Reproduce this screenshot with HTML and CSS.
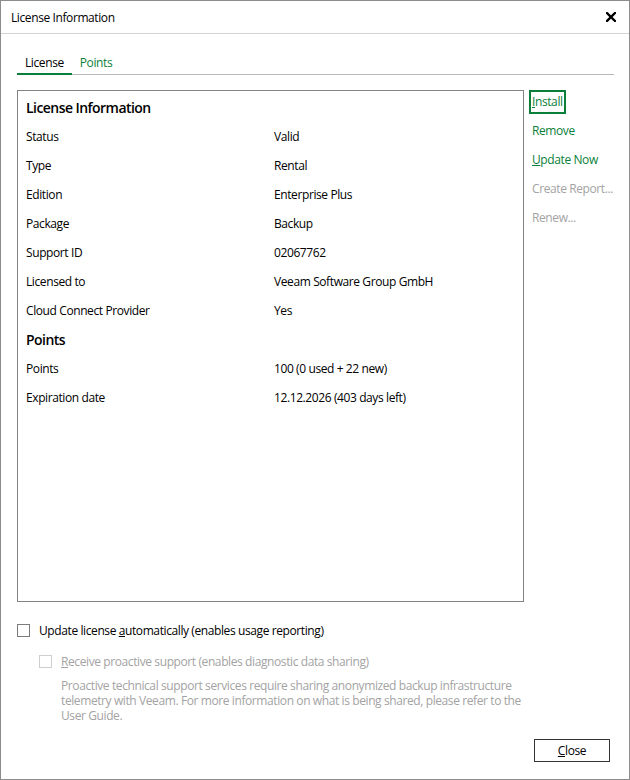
FILE: index.html
```html
<!DOCTYPE html>
<html>
<head>
<meta charset="utf-8">
<link rel="stylesheet" href="styles.css">
</head>
<body>
<div class="window">
  <div class="titlebar">
    <span class="title">License Information</span>
    <svg class="close-x" width="10" height="10" viewBox="0 0 10 10"><path d="M1 1 L9 9 M9 1 L1 9" stroke="#000" stroke-width="2.4" stroke-linecap="square"/></svg>
  </div>
  <div class="content">
    <div class="tabs">
      <div class="tab active">License</div>
      <div class="tab">Points</div>
    </div>
    <div class="main">
      <div class="panel">
        <div class="heading">License Information</div>
        <div class="row"><span class="label">Status</span><span class="value">Valid</span></div>
        <div class="row"><span class="label">Type</span><span class="value">Rental</span></div>
        <div class="row"><span class="label">Edition</span><span class="value">Enterprise Plus</span></div>
        <div class="row"><span class="label">Package</span><span class="value">Backup</span></div>
        <div class="row"><span class="label">Support ID</span><span class="value">02067762</span></div>
        <div class="row"><span class="label">Licensed to</span><span class="value">Veeam Software Group GmbH</span></div>
        <div class="row"><span class="label">Cloud Connect Provider</span><span class="value">Yes</span></div>
        <div class="heading">Points</div>
        <div class="row"><span class="label">Points</span><span class="value">100 (0 used + 22 new)</span></div>
        <div class="row"><span class="label">Expiration date</span><span class="value">12.12.2026 (403 days left)</span></div>
      </div>
      <div class="actions">
        <div class="action focused"><u>I</u>nstall</div>
        <div class="action">Remove</div>
        <div class="action"><u>U</u>pdate Now</div>
        <div class="action disabled">Create Report...</div>
        <div class="action disabled">Renew...</div>
      </div>
    </div>
    <div class="check-row">
      <span class="checkbox"></span>
      <span class="check-label">Update license <u>a</u>utomatically (enables usage reporting)</span>
    </div>
    <div class="sub">
      <div class="check-row sub-check">
        <span class="checkbox disabled"></span>
        <span class="check-label disabled"><u>R</u>eceive proactive support (enables diagnostic data sharing)</span>
      </div>
      <p class="desc">Proactive technical support services require sharing anonymized backup infrastructure telemetry with Veeam. For more information on what is being shared, please refer to the User Guide.</p>
    </div>
    <div class="footer">
      <div class="btn"><u>C</u>lose</div>
    </div>
  </div>
</div>
</body>
</html>
```
FILE: styles.css
```css
html, body {
  margin: 0;
  padding: 0;
  background: #fff;
}
body {
  font-family: "Open Sans", "Noto Sans", sans-serif;
  font-size: 12px;
  letter-spacing: -0.4px;
  color: #000;
}
.window {
  width: 630px;
  height: 780px;
  box-sizing: border-box;
  border: 1px solid #8c8c8c;
  display: flex;
  flex-direction: column;
}
.titlebar {
  height: 32px;
  border-bottom: 1px solid #d4d4d4;
  display: flex;
  align-items: center;
  justify-content: space-between;
  padding: 0 13px 0 10px;
}
.title {
  font-size: 12px;
}
.close-x {
  display: block;
}
.content {
  flex: 1;
  padding: 18px 15px 0 16px;
  display: flex;
  flex-direction: column;
}
.tabs {
  display: flex;
  border-bottom: 1px solid #b9b9b9;
  height: 23px;
  box-sizing: border-box;
}
.tab {
  padding: 0 8px;
  color: #0b7f3a;
  line-height: 21px;
  height: 22px;
  box-sizing: border-box;
}
.tab.active {
  color: #000;
  border-bottom: 2px solid #0b7f3a;
  height: 23px;
  margin-bottom: -1px;
}
.main {
  display: flex;
  margin-top: 15px;
}
.panel {
  flex: none;
  width: 507px;
  height: 512px;
  box-sizing: border-box;
  border: 1px solid #838383;
  padding: 2px 8px 0 8px;
}
.heading {
  font-weight: 600;
  font-size: 14px;
  letter-spacing: -0.55px;
  height: 29px;
  line-height: 29px;
}
.row {
  display: flex;
  height: 29px;
  line-height: 29px;
}
.label {
  width: 248px;
  flex: none;
}
.actions {
  margin-left: 5px;
  display: flex;
  flex-direction: column;
}
.action {
  color: #0b7f3a;
  height: 29px;
  line-height: 24px;
  padding: 0 3px;
  box-sizing: border-box;
  white-space: nowrap;
}
.action.focused {
  border: 2px solid #0b7f3a;
  height: 24px;
  line-height: 20px;
  padding: 0 1px;
  align-self: flex-start;
  margin-bottom: 5px;
}
.action.disabled {
  color: #a3a3a3;
}
.check-row {
  display: flex;
  align-items: center;
  margin-top: 20px;
  height: 16px;
}
.checkbox {
  width: 13px;
  height: 13px;
  border: 1px solid #7b7b7b;
  box-sizing: border-box;
  margin-right: 9px;
  flex: none;
}
.checkbox.disabled {
  border-color: #cfcfcf;
}
.check-label.disabled {
  color: #a3a3a3;
}
.sub {
  padding-left: 22px;
}
.sub-check {
  margin-top: 15px;
}
.desc {
  margin: 9px 0 0 22px;
  color: #a3a3a3;
  line-height: 15px;
  width: 470px;
}
.footer {
  display: flex;
  justify-content: flex-end;
  margin-top: auto;
  margin-bottom: 17px;
  padding-right: 4px;
}
.btn {
  width: 76px;
  height: 23px;
  box-sizing: border-box;
  border: 1px solid #333;
  text-align: center;
  line-height: 21px;
}
```
